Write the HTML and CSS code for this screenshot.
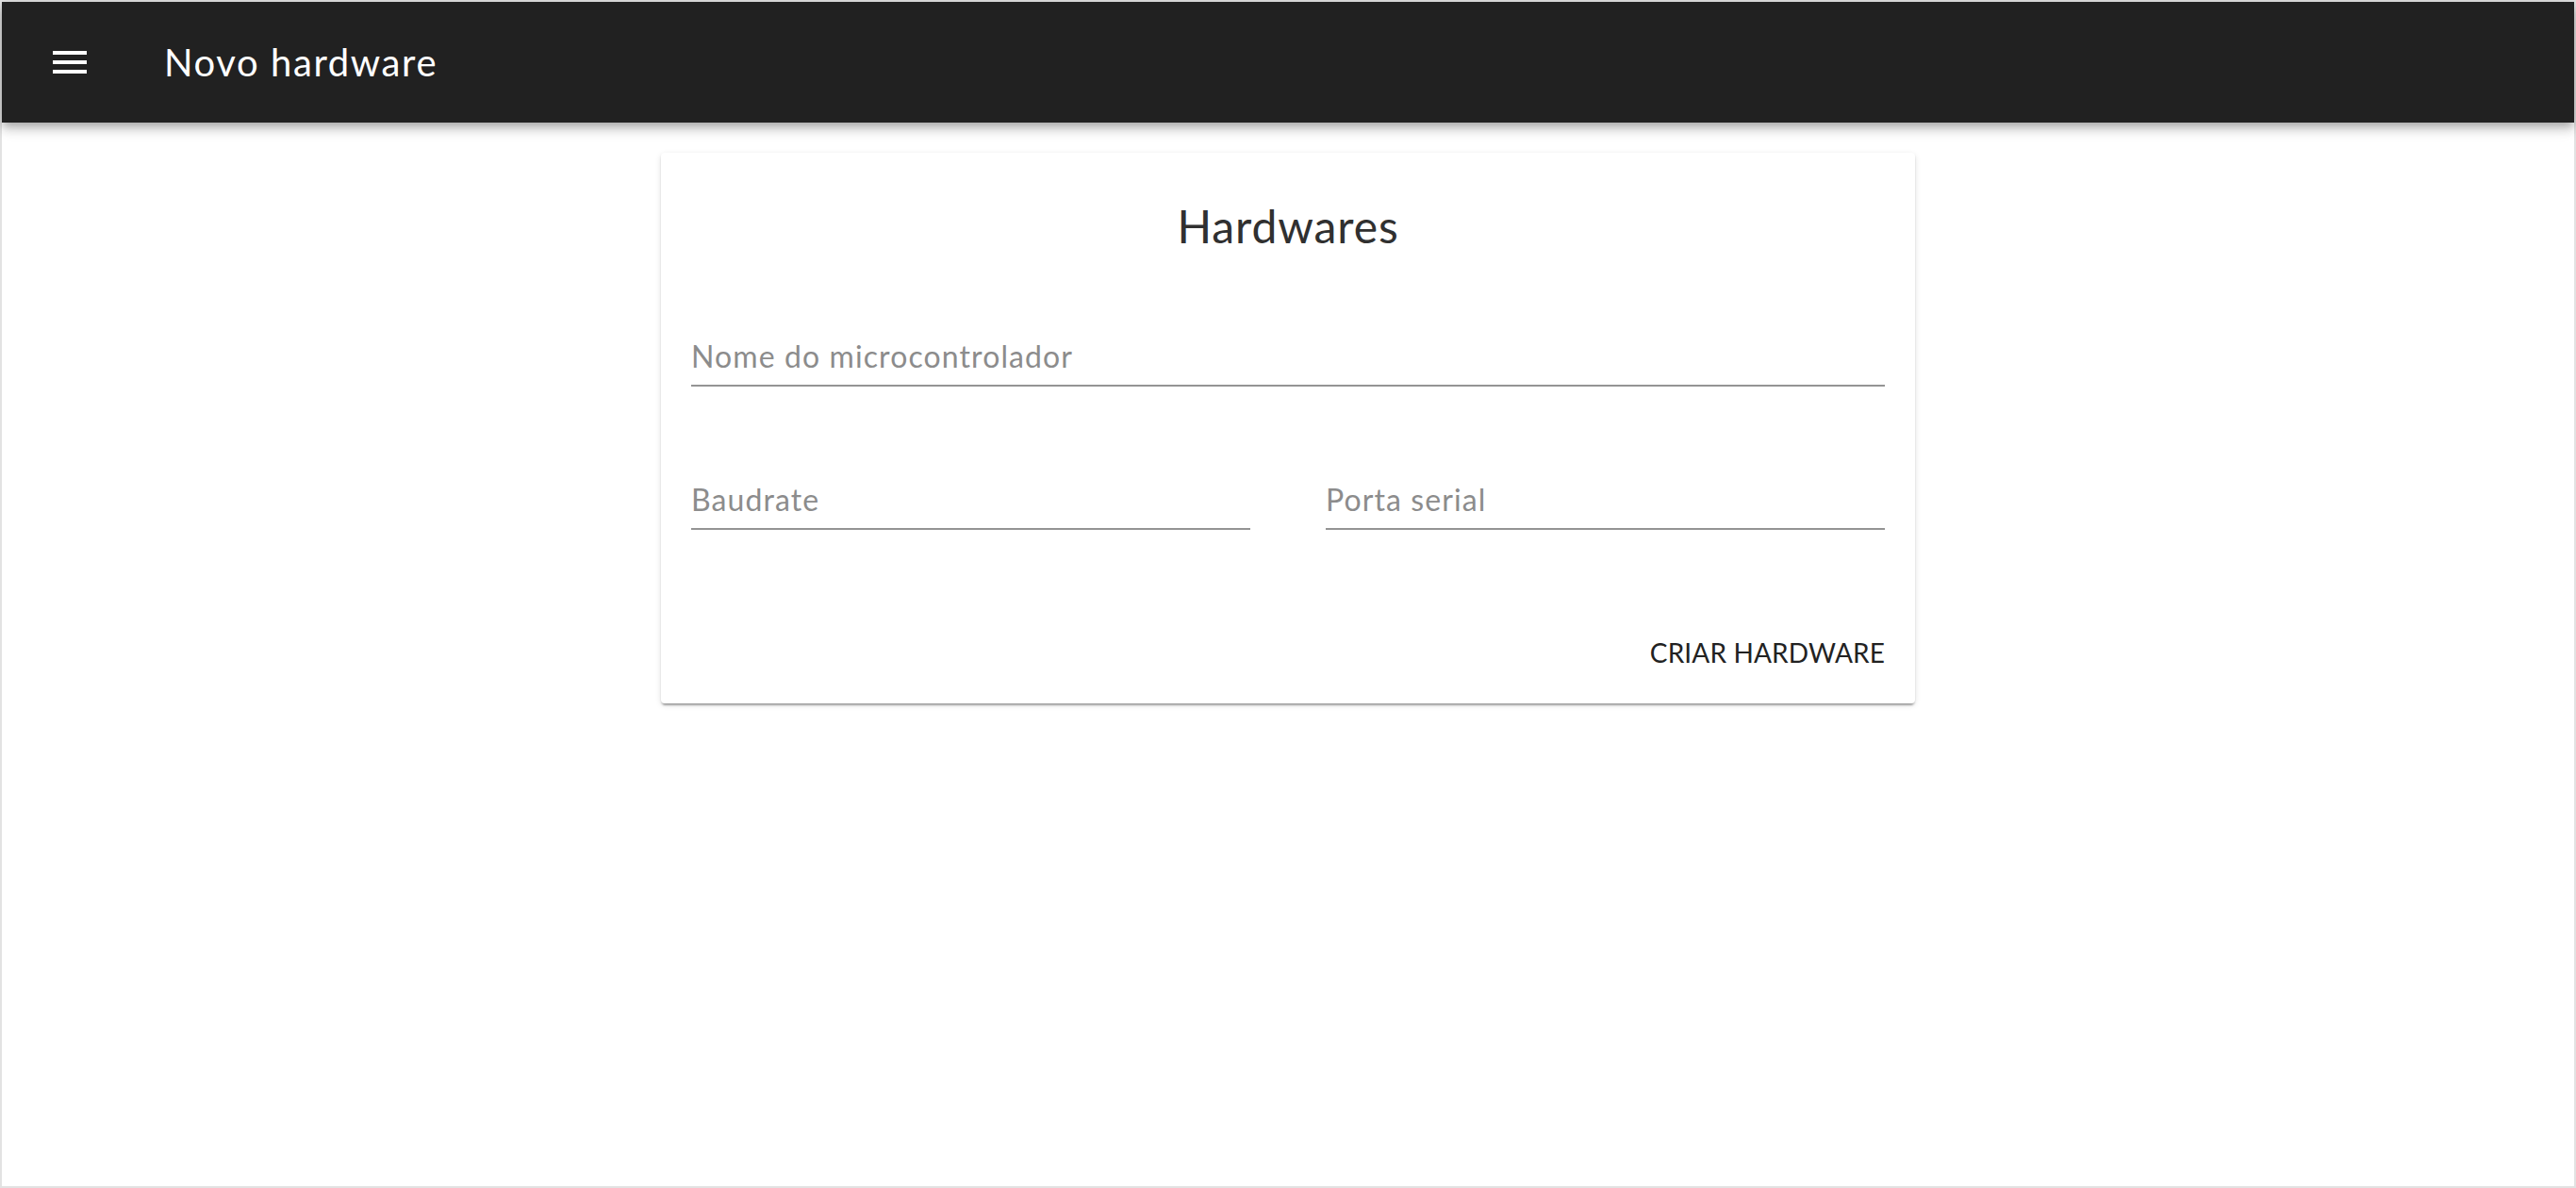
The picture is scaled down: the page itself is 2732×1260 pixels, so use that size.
FILE: index.html
```html
<!DOCTYPE html>
<html lang="pt">
<head>
<meta charset="utf-8">
<title>Novo hardware</title>
<link rel="stylesheet" href="styles.css">
</head>
<body>
<div class="page">
  <header class="appbar">
    <button class="menu-btn" aria-label="menu">
      <svg viewBox="0 0 24 24" width="48" height="48"><path fill="#fff" d="M3 18h18v-2H3v2zm0-5h18v-2H3v2zm0-7v2h18V6H3z"/></svg>
    </button>
    <div class="appbar-title">Novo hardware</div>
  </header>
  <main class="content">
    <section class="card">
      <h1 class="card-title">Hardwares</h1>
      <div class="field field-full"><span class="field-label">Nome do microcontrolador</span></div>
      <div class="row">
        <div class="field"><span class="field-label">Baudrate</span></div>
        <div class="field"><span class="field-label">Porta serial</span></div>
      </div>
      <div class="actions"><button class="text-btn">CRIAR HARDWARE</button></div>
    </section>
  </main>
</div>
</body>
</html>
```

FILE: styles.css
```css
* { box-sizing: border-box; }
html, body { margin: 0; padding: 0; height: 100%; }
body {
  font-family: "Lato", "Open Sans", sans-serif;
  background: #ffffff;
}
.page {
  height: 100%;
  border: 2px solid #e2e2e2;
  background: #fff;
  display: flex;
  flex-direction: column;
}
.appbar {
  height: 128px;
  flex: 0 0 128px;
  background: #212121;
  display: flex;
  align-items: center;
  padding-left: 48px;
  box-shadow: 0 4px 8px -2px rgba(0,0,0,.2), 0 8px 10px 0 rgba(0,0,0,.14), 0 2px 20px 0 rgba(0,0,0,.12);
  position: relative;
  z-index: 2;
}
.menu-btn {
  width: 48px;
  height: 48px;
  padding: 0;
  border: 0;
  background: transparent;
  display: block;
}
.menu-btn svg { display: block; }
.appbar-title {
  margin-left: 76px;
  color: #fff;
  font-size: 40px;
  line-height: 48px;
  font-weight: 400;
  letter-spacing: 1.6px;
}
.content {
  flex: 1;
  padding-top: 32px;
}
.card {
  width: 1330px;
  margin: 0 auto;
  background: #fff;
  border-radius: 4px;
  padding: 0 32px 34px;
  box-shadow: 0 4px 2px -2px rgba(0,0,0,.2), 0 2px 2px 0 rgba(0,0,0,.14), 0 2px 6px 0 rgba(0,0,0,.12);
}
.card-title {
  margin: 0;
  padding-top: 46px;
  text-align: center;
  font-size: 48px;
  line-height: 64px;
  font-weight: 400;
  color: #303030;
  letter-spacing: 0.9px;
}
.field {
  height: 56px;
  padding-bottom: 6px;
  border-bottom: 2px solid #949494;
  display: flex;
  align-items: flex-end;
}
.field-full { margin-top: 82px; }
.field-label {
  font-size: 32px;
  line-height: 48px;
  color: #8c8c8c;
  letter-spacing: 1.1px;
}
.row {
  display: grid;
  grid-template-columns: 1fr 1fr;
  column-gap: 80px;
  margin-top: 96px;
}
.actions {
  display: flex;
  justify-content: flex-end;
  margin-top: 110px;
}
.text-btn {
  border: 0;
  background: transparent;
  padding: 0;
  font-family: inherit;
  font-size: 28px;
  line-height: 40px;
  color: #222;
  letter-spacing: 0.15px;
}
```
